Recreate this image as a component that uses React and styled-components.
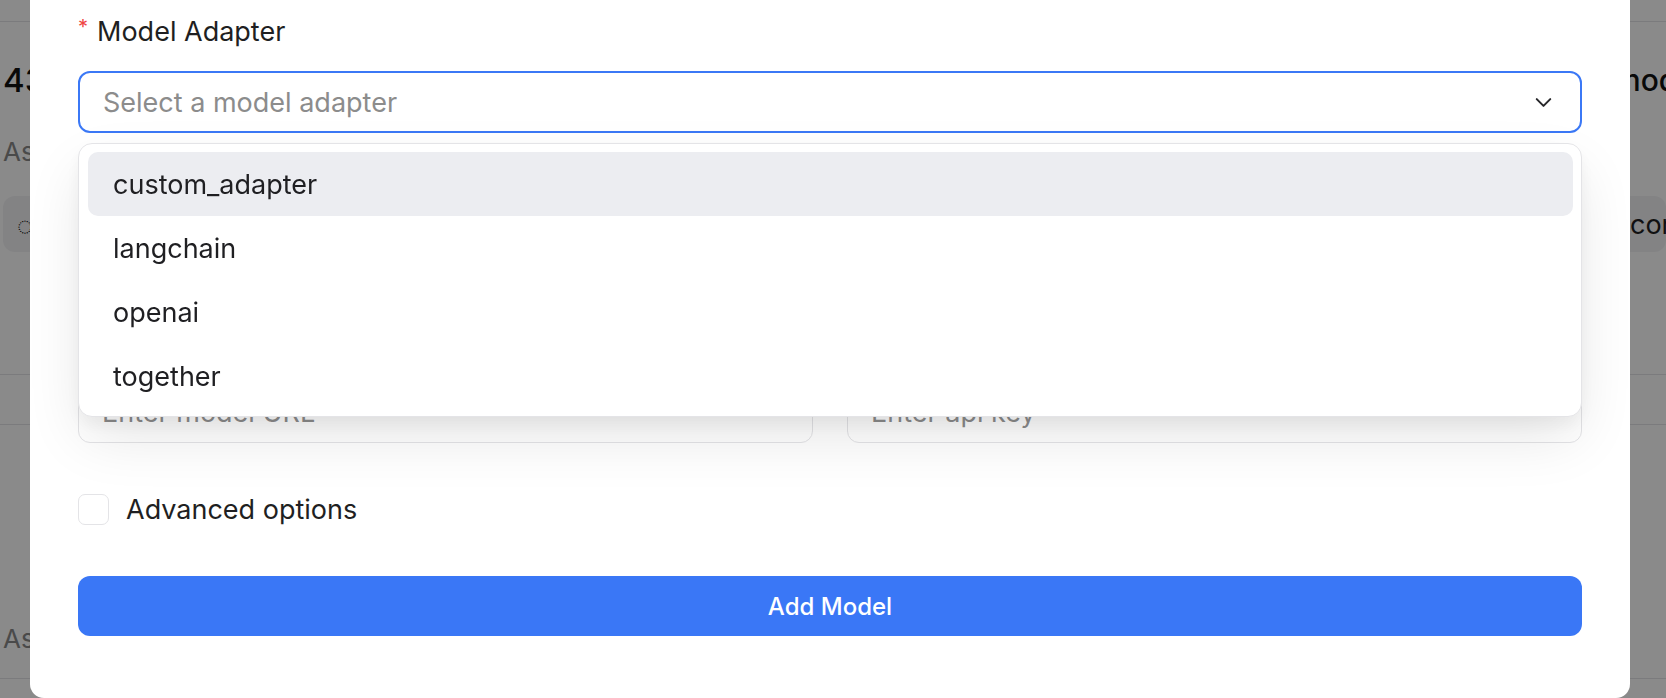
import styled, { createGlobalStyle } from 'styled-components'
import { ChevronDown } from 'lucide-react'

const GlobalStyle = createGlobalStyle`
  html, body {
    margin: 0;
    padding: 0;
    overflow: hidden;
  }
  body {
    font-family: Inter, "Noto Sans", "Liberation Sans", sans-serif;
    color: #1f1f22;
    background: #ffffff;
  }
  * {
    box-sizing: border-box;
  }
`

/* ---------- page behind the dialog ---------- */

const Page = styled.div`
  width: 1666px;
  height: 698px;
  overflow: hidden;
  background: #ffffff;
`

const TopBar = styled.div`
  height: 22px;
  border-bottom: 1px solid #e4e4e7;
`

const Cards = styled.div`
  display: grid;
  grid-template-columns: 1614px 1fr;
  height: 353px;
  border-bottom: 1px solid #e4e4e7;
`

const Card = styled.div`
  padding: 38px 0 0 ${props => props.$inset}px;
  white-space: nowrap;
  overflow: hidden;
`

const Stat = styled.div`
  font-size: ${props => props.$size}px;
  font-weight: 500;
  line-height: 40px;
  color: #111111;
`

const StatLabel = styled.div`
  margin-top: 34px;
  font-size: 26px;
  line-height: 36px;
  color: #8a8a8a;
`

const Chip = styled.div`
  margin-top: 26px;
  height: 56px;
  border-radius: 12px;
  background: #f2f2f4;
  display: flex;
  align-items: center;
  padding-left: ${props => props.$pad}px;
  font-size: 27px;
  color: #1f1f22;
`

const Divider = styled.div`
  height: 50px;
  border-bottom: 1px solid #e4e4e7;
`

const Section = styled.div`
  padding: 196px 0 0 3px;
  font-size: 26px;
  line-height: 36px;
  color: #8a8a8a;
  height: 254px;
  border-bottom: 1px solid #e4e4e7;
`

/* ---------- dialog ---------- */

const Overlay = styled.div`
  position: fixed;
  inset: 0;
  background: rgba(0, 0, 0, 0.46);
`

const Modal = styled.div`
  position: fixed;
  top: -36px;
  left: 30px;
  width: 1600px;
  background: #ffffff;
  border-radius: 14px;
  padding: 48px 48px 62px;
`

const Form = styled.form`
  display: flex;
  flex-direction: column;
`

const Field = styled.div`
  display: flex;
  flex-direction: column;
  margin-top: ${props => props.$gap || 0}px;
  position: relative;
`

const Label = styled.label`
  display: flex;
  align-items: flex-start;
  height: 40px;
  font-size: 27px;
  line-height: 40px;
  color: #1f1f22;
  margin-bottom: 19px;
`

const Required = styled.span`
  color: #ef4444;
  font-size: 20px;
  line-height: 30px;
  margin-right: 9px;
`

const SelectBox = styled.div`
  height: 62px;
  border: 2px solid #3b78f6;
  border-radius: 12px;
  display: flex;
  align-items: center;
  justify-content: space-between;
  padding: 0 23px 0 23px;
  font-size: 27px;
  color: #8c8c8c;
  background: #ffffff;
`

const Menu = styled.div`
  position: absolute;
  top: calc(100% + 10px);
  left: 0;
  right: 0;
  z-index: 5;
  background: #ffffff;
  border: 1px solid #e4e4e7;
  border-radius: 14px;
  padding: 8px 8px 8px 9px;
  box-shadow: 0 24px 60px -6px rgba(0, 0, 0, 0.11), 0 8px 18px rgba(0, 0, 0, 0.05);
`

const Option = styled.div`
  height: 64px;
  display: flex;
  align-items: center;
  padding-left: 25px;
  border-radius: 10px;
  font-size: 27px;
  color: #1f1f22;
  background: ${props => (props.$active ? '#ecedf1' : 'transparent')};
`

const Row = styled.div`
  display: grid;
  grid-template-columns: 1fr 1fr;
  gap: 34px;
  margin-top: 34px;
`

const Input = styled.input`
  height: 62px;
  width: 100%;
  border: 1.5px solid #e4e4e7;
  border-radius: 12px;
  padding: 0 23px;
  font-family: inherit;
  font-size: 27px;
  color: #1f1f22;
  outline: none;
  &::placeholder {
    color: #8c8c8c;
  }
`

const CheckRow = styled.label`
  display: flex;
  align-items: center;
  gap: 17px;
  margin-top: 51px;
  height: 31px;
  font-size: 27px;
  color: #1f1f22;
`

const CheckBox = styled.span`
  width: 31px;
  height: 31px;
  border: 1.5px solid #e4e4e7;
  border-radius: 7px;
  background: #ffffff;
`

const SubmitButton = styled.button`
  margin-top: 51px;
  height: 60px;
  border: none;
  border-radius: 12px;
  background: #3a77f6;
  color: #ffffff;
  font-family: inherit;
  font-size: 24px;
  font-weight: 500;
`

const adapters = ['custom_adapter', 'langchain', 'openai', 'together']

const App = () => {
  return (
    <>
      <GlobalStyle />
      <Page>
        <TopBar />
        <Cards>
          <Card $inset={3}>
            <Stat $size={33}>43</Stat>
            <StatLabel>Assistants</StatLabel>
            <Chip $pad={14}>◌ custom</Chip>
          </Card>
          <Card $inset={0}>
            <Stat $size={30}>models</Stat>
            <StatLabel>&nbsp;</StatLabel>
            <Chip $pad={16}>completion</Chip>
          </Card>
        </Cards>
        <Divider />
        <Section>Assistants</Section>
      </Page>

      <Overlay />
      <Modal>
        <Form onSubmit={e => e.preventDefault()}>
          <Field>
            <Label>
              <Required>*</Required>
              Model Adapter
            </Label>
            <SelectBox>
              <span>Select a model adapter</span>
              <ChevronDown size={27} strokeWidth={1.8} color="#27272a" />
            </SelectBox>
            <Menu>
              {adapters.map((name, index) => (
                <Option key={name} $active={index === 0}>
                  {name}
                </Option>
              ))}
            </Menu>
          </Field>

          <Field $gap={34}>
            <Label>Model Name</Label>
            <Input placeholder="Enter model name" />
          </Field>

          <Row>
            <Field>
              <Label>Model URL</Label>
              <Input placeholder="Enter model URL" />
            </Field>
            <Field>
              <Label>API Key</Label>
              <Input placeholder="Enter api key" />
            </Field>
          </Row>

          <CheckRow>
            <CheckBox />
            Advanced options
          </CheckRow>

          <SubmitButton type="submit">Add Model</SubmitButton>
        </Form>
      </Modal>
    </>
  )
}

export default App
